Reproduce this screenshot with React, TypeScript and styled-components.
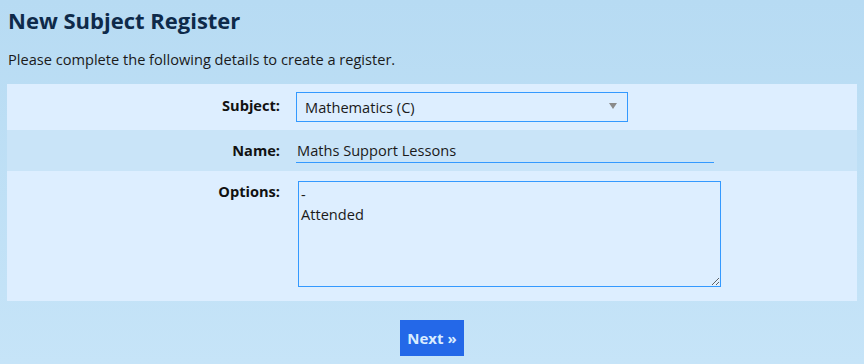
import styled, { createGlobalStyle } from 'styled-components';

const GlobalStyle = createGlobalStyle`
  html, body {
    margin: 0;
    padding: 0;
  }
  body {
    min-height: 364px;
    background: linear-gradient(180deg, #b7dbf3 0%, #c6e4f8 100%);
    font-family: 'Open Sans', 'Liberation Sans', sans-serif;
    color: #1a1a1a;
  }
`;

const Page = styled.div`
  padding: 0 7px;
  height: 364px;
  box-sizing: border-box;
`;

const Title = styled.h1`
  margin: 0;
  padding: 6px 0 0 1px;
  font-size: 22px;
  line-height: 28px;
  font-weight: 700;
  color: #0e2a4a;
`;

const Intro = styled.p`
  margin: 15px 0 0 1px;
  font-size: 14.6px;
  line-height: 20px;
  color: #1a1a1a;
`;

const Panel = styled.div`
  margin-top: 15px;
  display: flex;
  flex-direction: column;
`;

const Row = styled.div<{ $alt?: boolean; $height: number; $pad: number }>`
  display: grid;
  grid-template-columns: 281px 1fr;
  height: ${({ $height }) => $height}px;
  padding-top: ${({ $pad }) => $pad}px;
  box-sizing: border-box;
  background: ${({ $alt }) => ($alt ? '#c9e4f8' : '#ddeeff')};
`;

const Label = styled.label<{ $top: number }>`
  text-align: right;
  padding-right: 8px;
  padding-top: ${({ $top }) => $top}px;
  font-size: 14.6px;
  line-height: 20px;
  font-weight: 700;
  color: #111;
`;

const Field = styled.div<{ $indent: number }>`
  padding-left: ${({ $indent }) => $indent}px;
`;

const SelectWrap = styled.div`
  position: relative;
  width: 332px;
  height: 30px;

  &::after {
    content: '';
    position: absolute;
    right: 11px;
    top: 11px;
    border-left: 4px solid transparent;
    border-right: 4px solid transparent;
    border-top: 6px solid #8a8a8a;
    pointer-events: none;
  }
`;

const Select = styled.select`
  appearance: none;
  width: 100%;
  height: 100%;
  box-sizing: border-box;
  border: 1px solid #3399ff;
  border-radius: 0;
  background: #ddeeff;
  padding: 0 0 0 8px;
  font-family: inherit;
  font-size: 14.6px;
  color: #1a1a1a;
  outline: none;
`;

const TextInput = styled.input`
  width: 418px;
  box-sizing: border-box;
  border: none;
  border-bottom: 1px solid #3399ff;
  background: transparent;
  padding: 0 0 2px 1px;
  height: 23px;
  font-family: inherit;
  font-size: 14.6px;
  color: #1a1a1a;
  outline: none;
`;

const TextArea = styled.textarea`
  display: block;
  width: 423px;
  height: 106px;
  box-sizing: border-box;
  border: 1px solid #3399ff;
  border-radius: 0;
  background: #ddeeff;
  padding: 2px 2px;
  font-family: inherit;
  font-size: 14.6px;
  line-height: 20px;
  color: #1a1a1a;
  outline: none;
`;

const Actions = styled.div`
  display: flex;
  justify-content: center;
  margin-top: 19px;
`;

const NextButton = styled.button`
  width: 64px;
  height: 36px;
  border: none;
  background: #2468e8;
  color: #d9ecff;
  font-family: inherit;
  font-size: 15px;
  font-weight: 700;
  padding: 0;
  cursor: pointer;
`;

export default function App() {
  return (
    <>
      <GlobalStyle />
      <Page>
        <Title>New Subject Register</Title>
        <Intro>Please complete the following details to create a register.</Intro>
        <Panel>
          <Row $height={46} $pad={8}>
            <Label $top={3}>Subject:</Label>
            <Field $indent={8}>
              <SelectWrap>
                <Select defaultValue="maths-c">
                  <option value="maths-c">Mathematics (C)</option>
                </Select>
              </SelectWrap>
            </Field>
          </Row>
          <Row $alt $height={41} $pad={9}>
            <Label $top={1}>Name:</Label>
            <Field $indent={8}>
              <TextInput defaultValue="Maths Support Lessons" />
            </Field>
          </Row>
          <Row $height={130} $pad={10}>
            <Label $top={0}>Options:</Label>
            <Field $indent={10}>
              <TextArea defaultValue={'-\nAttended'} />
            </Field>
          </Row>
        </Panel>
        <Actions>
          <NextButton type="button">Next »</NextButton>
        </Actions>
      </Page>
    </>
  );
}
